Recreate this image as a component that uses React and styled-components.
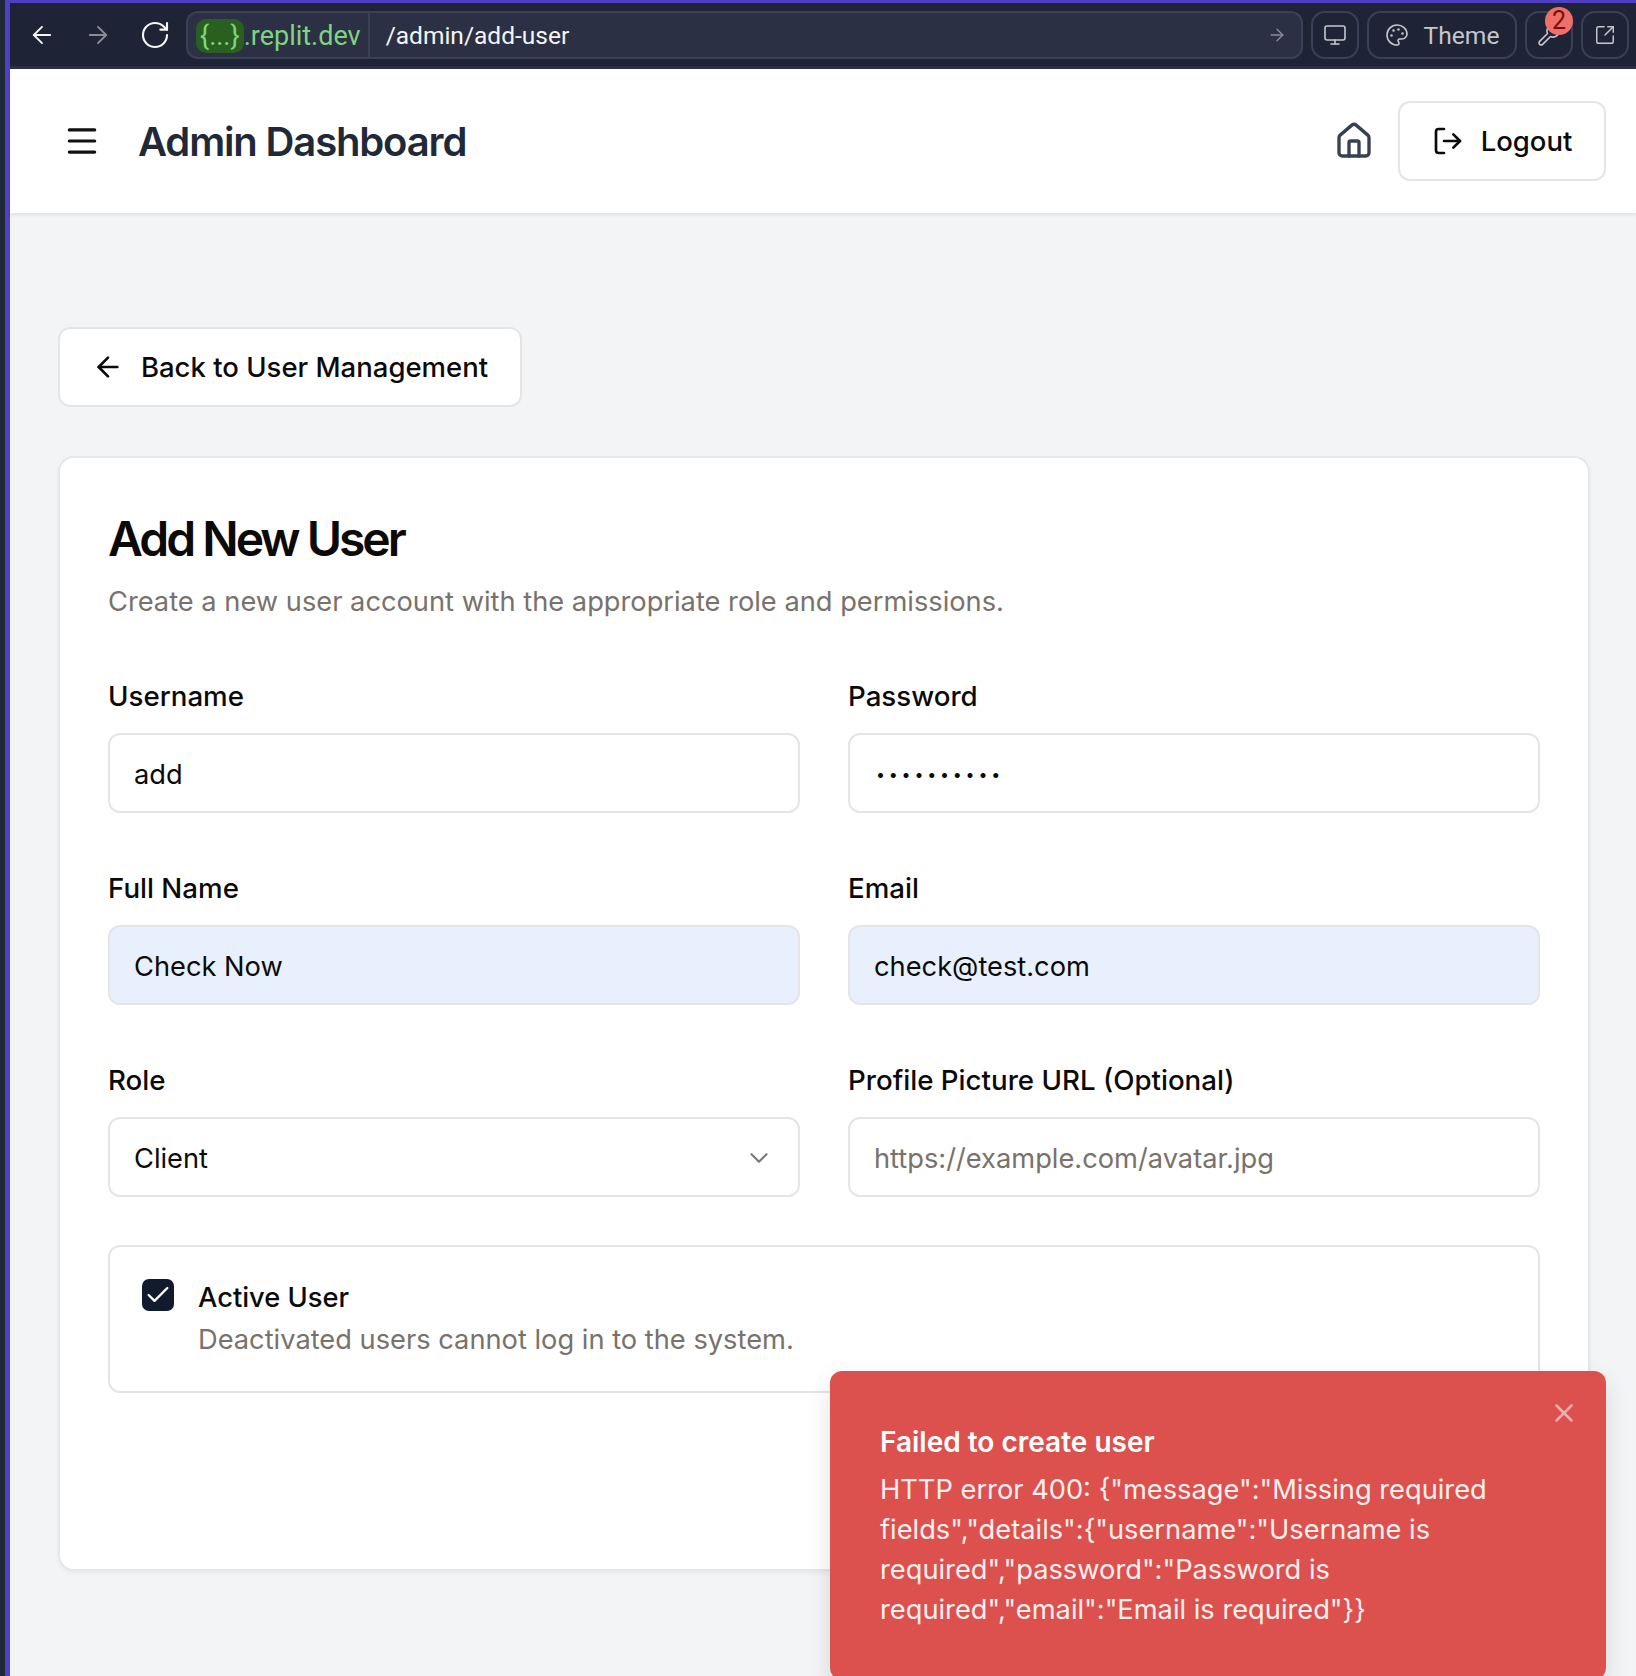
import styled, { createGlobalStyle } from "styled-components";
import {
  ArrowLeft,
  ArrowRight,
  RotateCw,
  Monitor,
  Palette,
  Wrench,
  SquareArrowOutUpRight,
  Menu,
  House,
  LogOut,
  ChevronDown,
  Check,
  X,
} from "lucide-react";

const GlobalStyle = createGlobalStyle`
  html, body {
    margin: 0;
    padding: 0;
    background: #f3f4f6;
  }
  body {
    font-family: "Inter", "Liberation Sans", sans-serif;
    color: #0c0a09;
  }
  * {
    box-sizing: border-box;
  }
`;

const Frame = styled.div`
  position: relative;
  width: 1636px;
  height: 1676px;
  overflow: hidden;
  display: flex;
  background: #4f3fc4;
`;

const OuterEdge = styled.div`
  width: 5px;
  background: #1f2937;
`;

const Window = styled.div`
  flex: 1;
  margin-left: 5px;
  padding-top: 3px;
  display: flex;
  flex-direction: column;
  min-width: 0;
`;

const BrowserBar = styled.div`
  height: 66px;
  background: #1e2336;
  border-bottom: 3px solid #2b3044;
  display: flex;
  align-items: center;
  padding: 1px 7px 0 17px;
  color: #f5f5f5;
  font-family: "Roboto", "Liberation Sans", sans-serif;
`;

const NavIcon = styled.span`
  display: flex;
  width: ${(p) => p.$w}px;
  justify-content: center;
  color: ${(p) => (p.$dim ? "#8b8d96" : "#f5f5f5")};
`;

const NavGroup = styled.div`
  display: flex;
  align-items: center;
  gap: 27px;
  margin-right: 15px;
`;

const AddressBar = styled.div`
  flex: 1;
  height: 48px;
  display: flex;
  align-items: center;
  background: #2b3044;
  border: 2px solid #3a4056;
  border-radius: 12px;
  padding: 0 14px 0 8px;
`;

const Host = styled.div`
  display: flex;
  align-items: center;
  height: 100%;
  padding: 1px 7px 0 0;
  border-right: 2px solid #3a4056;
  color: #7fd47f;
  font-size: 27px;
`;

const HostBadge = styled.span`
  background: #2a5f22;
  border-radius: 10px;
  height: 34px;
  line-height: 34px;
  padding: 0 4px;
`;

const PathText = styled.span`
  flex: 1;
  padding-left: 16px;
  font-size: 24.5px;
`;

const BarButton = styled.div`
  position: relative;
  height: 48px;
  width: ${(p) => (p.$wide ? "150px" : "48px")};
  margin-left: 8px;
  display: flex;
  align-items: center;
  justify-content: center;
  gap: 15px;
  border: 2px solid #3a4056;
  border-radius: 14px;
  color: #c5c7cd;
  font-size: 24.6px;
`;

const CountBadge = styled.span`
  position: absolute;
  top: -6px;
  left: 18px;
  width: 28px;
  height: 28px;
  border-radius: 50%;
  background: #ef6f6a;
  color: #7f0d0d;
  font-size: 25px;
  line-height: 28px;
  text-align: center;
`;

const Header = styled.header`
  height: 144px;
  background: #fff;
  box-shadow: 0 2px 4px rgba(0, 0, 0, 0.08);
  display: flex;
  align-items: center;
  padding: 0 30px 0 53px;
  color: #1f2937;
  position: relative;
`;

const Title = styled.h1`
  flex: 1;
  margin: 0 0 0 37px;
  font-size: 40px;
  font-weight: 600;
  letter-spacing: -1.15px;
`;

const HomeLink = styled.span`
  display: flex;
  color: #374151;
  margin-right: 24px;
`;

const OutlineButton = styled.div`
  height: 80px;
  display: inline-flex;
  align-items: center;
  background: #fff;
  border: 2px solid #e5e5e5;
  border-radius: 12px;
  color: #0c0a09;
  font-size: 27.5px;
  font-weight: 500;
`;

const LogoutButton = styled(OutlineButton)`
  width: 208px;
  justify-content: center;
  gap: 17px;
`;

const BackButton = styled(OutlineButton)`
  width: 464px;
  justify-content: center;
  gap: 17px;
`;

const Main = styled.main`
  flex: 1;
  background: #f3f4f6;
  padding: 114px 46px 0 48px;
  display: flex;
  flex-direction: column;
  align-items: flex-start;
  gap: 49px;
`;

const Card = styled.section`
  width: 100%;
  height: 1115px;
  background: #fff;
  border: 2px solid #e7e7e7;
  border-radius: 16px;
  padding: 49px 48px;
  box-shadow: 0 2px 4px rgba(0, 0, 0, 0.05);
`;

const CardTitle = styled.h2`
  margin: 0;
  font-size: 48px;
  line-height: 64px;
  font-weight: 600;
  letter-spacing: -3px;
  color: #0c0a09;
`;

const CardText = styled.p`
  margin: 11px 0 54px;
  font-size: 27.25px;
  line-height: 40px;
  color: #78716c;
`;

const FormGrid = styled.div`
  display: grid;
  grid-template-columns: 692px 692px;
  column-gap: 48px;
  row-gap: 55px;
`;

const Field = styled.div`
  display: flex;
  flex-direction: column;
  gap: 17px;
`;

const Label = styled.label`
  font-size: 27.7px;
  line-height: 40px;
  font-weight: 450;
`;

const Control = styled.div`
  height: 80px;
  display: flex;
  align-items: center;
  justify-content: space-between;
  padding: 2px 24px 0 ${(p) => (p.$secret ? "26px" : "24px")};
  border: 2px solid #e5e5e5;
  border-radius: 12px;
  font-size: ${(p) => (p.$secret ? "16px" : "27.25px")};
  background: ${(p) => (p.$filled ? "#e8f0fe" : "#fff")};
  color: ${(p) => (p.$placeholder ? "#78716c" : "#0c0a09")};
  letter-spacing: ${(p) => (p.$secret ? "3.8px" : "normal")};
`;

const ActiveBox = styled.div`
  margin-top: 48px;
  height: 148px;
  border: 2px solid #e5e5e5;
  border-radius: 12px;
  padding: 31px 32px;
  display: flex;
  gap: 24px;
`;

const CheckBox = styled.span`
  width: 32px;
  height: 32px;
  margin-top: 1px;
  border-radius: 7px;
  background: #111a2e;
  color: #fff;
  display: flex;
  align-items: center;
  justify-content: center;
`;

const ActiveLabel = styled.div`
  font-size: 27.3px;
  line-height: 40px;
  font-weight: 450;
`;

const ActiveHint = styled.div`
  font-size: 27.25px;
  line-height: 40px;
  color: #78716c;
  margin-top: 2px;
`;

const Toast = styled.div`
  position: absolute;
  left: 830px;
  top: 1371px;
  width: 776px;
  height: 309px;
  padding: 51px 50px 0;
  background: #dc514d;
  border-radius: 12px;
  color: #fdf0ef;
  box-shadow: 0 10px 24px rgba(0, 0, 0, 0.12);
`;

const ToastTitle = styled.div`
  font-size: 28px;
  line-height: 40px;
  font-weight: 600;
  color: #fff;
`;

const ToastText = styled.div`
  margin-top: 8px;
  font-size: 27.25px;
  line-height: 40px;
`;

const ToastClose = styled.span`
  position: absolute;
  top: 27px;
  right: 27px;
  display: flex;
  color: #f3b1ae;
`;

const App = () => {
  return (
    <Frame>
      <GlobalStyle />
      <OuterEdge />
      <Window>
        <BrowserBar>
          <NavGroup>
            <NavIcon $w={29}>
              <ArrowLeft size={28} strokeWidth={1.6} />
            </NavIcon>
            <NavIcon $w={29} $dim>
              <ArrowRight size={28} strokeWidth={1.6} />
            </NavIcon>
            <NavIcon $w={32}>
              <RotateCw size={32} strokeWidth={1.6} />
            </NavIcon>
          </NavGroup>
          <AddressBar>
            <Host>
              <HostBadge>{"{...}"}</HostBadge>
              .replit.dev
            </Host>
            <PathText>/admin/add-user</PathText>
            <ArrowRight size={20} strokeWidth={1.6} color="#8b8d96" />
          </AddressBar>
          <BarButton>
            <Monitor size={24} strokeWidth={1.6} />
          </BarButton>
          <BarButton $wide>
            <Palette size={24} strokeWidth={1.6} />
            Theme
          </BarButton>
          <BarButton>
            <Wrench size={24} strokeWidth={1.6} />
            <CountBadge>2</CountBadge>
          </BarButton>
          <BarButton>
            <SquareArrowOutUpRight size={22} strokeWidth={1.6} />
          </BarButton>
        </BrowserBar>

        <Header>
          <Menu size={38} strokeWidth={2} color="#111" />
          <Title>Admin Dashboard</Title>
          <HomeLink>
            <House size={40} strokeWidth={2} />
          </HomeLink>
          <LogoutButton>
            <LogOut size={32} strokeWidth={2} />
            Logout
          </LogoutButton>
        </Header>

        <Main>
          <BackButton>
            <ArrowLeft size={32} strokeWidth={2} />
            Back to User Management
          </BackButton>
          <Card>
            <CardTitle>Add New User</CardTitle>
            <CardText>
              Create a new user account with the appropriate role and permissions.
            </CardText>
            <FormGrid>
              <Field>
                <Label>Username</Label>
                <Control>add</Control>
              </Field>
              <Field>
                <Label>Password</Label>
                <Control $secret>••••••••••</Control>
              </Field>
              <Field>
                <Label>Full Name</Label>
                <Control $filled>Check Now</Control>
              </Field>
              <Field>
                <Label>Email</Label>
                <Control $filled>check@test.com</Control>
              </Field>
              <Field>
                <Label>Role</Label>
                <Control>
                  Client
                  <ChevronDown size={30} strokeWidth={1.8} color="#7b7b7b" />
                </Control>
              </Field>
              <Field>
                <Label>Profile Picture URL (Optional)</Label>
                <Control $placeholder>https://example.com/avatar.jpg</Control>
              </Field>
            </FormGrid>
            <ActiveBox>
              <CheckBox>
                <Check size={28} strokeWidth={2} />
              </CheckBox>
              <div>
                <ActiveLabel>Active User</ActiveLabel>
                <ActiveHint>Deactivated users cannot log in to the system.</ActiveHint>
              </div>
            </ActiveBox>
          </Card>
        </Main>
      </Window>

      <Toast>
        <ToastClose>
          <X size={30} strokeWidth={2} />
        </ToastClose>
        <ToastTitle>Failed to create user</ToastTitle>
        <ToastText>
          HTTP error 400: {'{"message":"Missing required'}
          <br />
          {'fields","details":{"username":"Username is'}
          <br />
          {'required","password":"Password is'}
          <br />
          {'required","email":"Email is required"}}'}
        </ToastText>
      </Toast>
    </Frame>
  );
};

export default App;
